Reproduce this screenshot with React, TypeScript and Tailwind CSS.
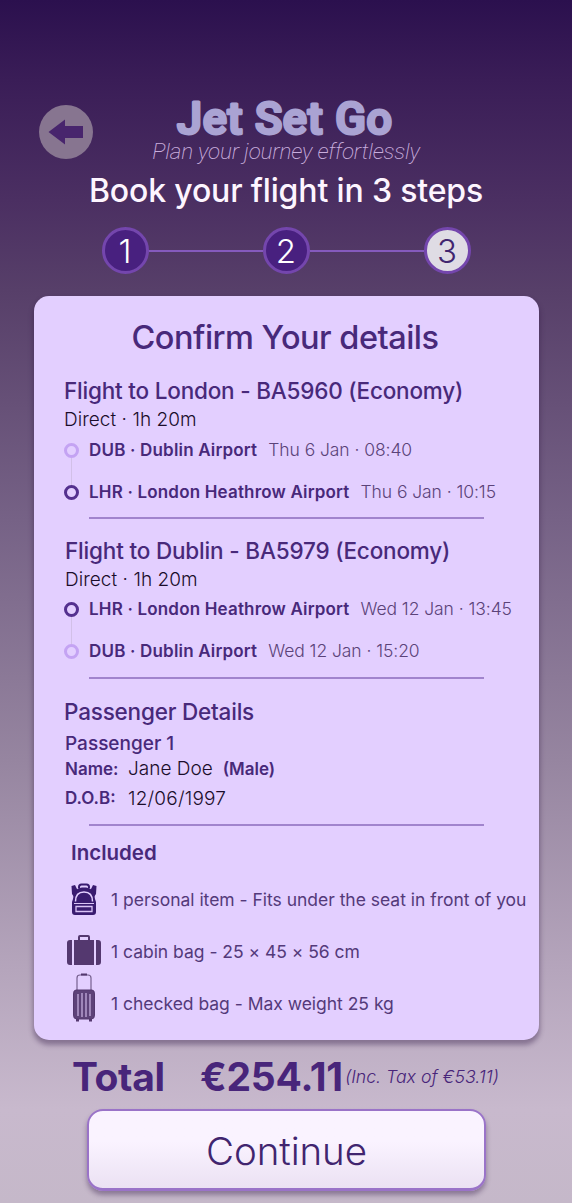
import type { ReactNode } from "react";

function Step({ n, active }: { n: number; active?: boolean }) {
  return (
    <div
      className={
        "flex size-[47px] shrink-0 items-center justify-center rounded-full border-[3px] border-[#7446ad] pt-[2px] text-[33px] font-[350] leading-none " +
        (active ? "bg-[#dfdce4] text-[#41256f]" : "bg-[#48207f] text-white")
      }
    >
      {n}
    </div>
  );
}

function Stop({ dark, place, time, line, gap }: { dark?: boolean; place: string; time: string; line?: boolean; gap: string }) {
  return (
    <div className={"flex h-5 items-center whitespace-nowrap pl-[30px] leading-5 " + gap}>
      <div className={"relative size-[15px] shrink-0 rounded-full border-[3px] " + (dark ? "border-[#54308f]" : "border-[#c4a3f3]")}>
        {line && <div className="absolute left-1 top-3 h-[27px] w-px bg-[#d2c0e8]" />}
      </div>
      <span className="ml-[10px] text-[17px] font-semibold tracking-[0.18px] text-[#48297a]">{place}</span>
      <span className="ml-[11px] text-[17.5px] font-light tracking-[-0.07px] text-[#5b4379]">{time}</span>
    </div>
  );
}

function Rule({ gap }: { gap: string }) {
  return <div className={"ml-[55px] h-[2px] w-[395px] shrink-0 bg-[#a184cd] " + gap} />;
}

function Backpack() {
  return (
    <svg width="28" height="34" viewBox="0 0 28 34">
      <path d="M9 5V4q0-2.500 2.500-2.500h5Q19 1.500 19 4v1" fill="none" stroke="#391b70" strokeWidth="2" />
      <path d="M1.500 3l3.500-1 3 6-4 6-2-3zM26.500 3 23 2l-3 6 4 6 2-3z" fill="#391b70" />
      <path d="M3 16Q4 4.500 12 4.500h4q8 0 9 11.500l1 3v10q0 3-3 3H5q-3 0-3-3V19z" fill="#391b70" />
      <path d="M5.500 18.500Q5.500 9 14 9t8.500 9.500" fill="none" stroke="#e3cfff" strokeWidth="1.500" />
      <path d="M4 20.500h20" stroke="#d9c3f6" strokeWidth="1" />
      <path d="M6 23.500h16v5H6z" fill="none" stroke="#d9c3f6" strokeWidth="1.300" />
    </svg>
  );
}

function Suitcase() {
  return (
    <svg width="36" height="31" viewBox="0 0 36 31" fill="#54386f">
      <path d="M13 6V2q0-1 1-1h8q1 0 1 1v4" fill="none" stroke="#54386f" strokeWidth="2" />
      <path d="M8 5h20v25H8zM6 5v25H4q-3 0-3-3V8q0-3 3-3zM30 5v25h2q3 0 3-3V8q0-3-3-3z" />
    </svg>
  );
}

function Trolley() {
  return (
    <svg width="24" height="50" viewBox="0 0 24 50">
      <path d="M5 18V5q0-3 3-3h8q3 0 3 3v13" fill="none" stroke="#76608f" strokeWidth="1.200" />
      <path d="M9 1.500h6" stroke="#54386f" strokeWidth="2" />
      <path d="M4 17h16q2.500 0 2.500 4v21q0 4-3 4h-15q-3 0-3-4V21q0-4 2.500-4z" fill="#5d4279" stroke="#54386f" />
      <path d="M6 21v22M10 20v24M14 20v24M18 21v22" stroke="#cbb5e4" strokeWidth="1.200" />
      <path d="M4 46h3v2.500H4zM17 46h3v2.500h-3z" fill="#54386f" />
    </svg>
  );
}

function Item({ icon, children }: { icon: ReactNode; children: ReactNode }) {
  return (
    <div className="flex h-11 items-center">
      <div className="flex w-[40px] shrink-0 justify-center">{icon}</div>
      <span className="ml-[7px] whitespace-nowrap text-[17.5px] tracking-[-0.02px] text-[#543a7a]">{children}</span>
    </div>
  );
}

export default function App() {
  return (
    <div className="flex h-[1203px] w-[572px] flex-col overflow-hidden bg-[linear-gradient(180deg,#2b104e_0px,#3a1d57_80px,#4b2f62_200px,#573f69_290px,#766286_520px,#9685a0_760px,#b5a5bc_970px,#c8b9cd_1110px,#c5b8c9_1203px)] font-['Inter',sans-serif]">
      <header className="relative h-[296px] shrink-0">
        <button aria-label="Back" className="absolute left-[39px] top-[105px] flex size-[54px] items-center justify-center rounded-full bg-[#877590]">
          <svg width="36" height="26" viewBox="0 0 36 26" fill="#48256d">
            <path d="M.5 13 17 .5V7h18v12H17v6.500z" />
          </svg>
        </button>
        <div className="flex flex-col items-center whitespace-nowrap pt-[90px]">
          <h1 className="h-[49px]">
            <svg width="224" height="49" viewBox="0 0 224 49" className="overflow-visible" fill="#aaa3d3" stroke="#aaa3d3">
              <text x="3" y="44" textLength="215" className="font-['Roboto',sans-serif] text-[45px] font-medium" strokeWidth="3" strokeLinejoin="round">Jet Set Go</text>
            </svg>
          </h1>
          <p className="h-6 font-['Roboto',sans-serif] text-[22.5px] font-extralight italic leading-[24px] tracking-[-0.2px] text-[#c9aedd]">Plan your journey effortlessly</p>
          <h2 className="mt-[10px] h-9 text-[32px] font-medium leading-9 tracking-[-0.15px] text-[#fdf5ff]">Book your flight in 3 steps</h2>
          <div className="mt-[18px] flex items-center">
            <Step n={1} />
            <div className="h-[2px] w-[114px] bg-[#855abd]" />
            <Step n={2} />
            <div className="h-[2px] w-[114px] bg-[#855abd]" />
            <Step n={3} active />
          </div>
        </div>
      </header>

      <main className="ml-[34px] flex h-[744px] w-[505px] shrink-0 flex-col rounded-[15px] bg-[#e3cfff] pt-4 text-[#48297a] shadow-[0_4px_5px_1px_rgba(50,25,70,0.4)]">
        <h2 className="h-[50px] whitespace-nowrap pr-[3px] pt-px text-center text-[32.5px] font-[450] leading-[50px] tracking-[-0.5px]">Confirm Your details</h2>

        <h3 className="ml-[30px] mt-[14px] h-[30px] whitespace-nowrap text-[22.5px] font-[450] leading-[30px] tracking-[-0.2px]">Flight to London - BA5960 (Economy)</h3>
        <p className="ml-[30px] h-[26px] pt-px text-[19px] font-light leading-[26px] tracking-[0.05px] text-[#1b0d2b]">Direct · 1h 20m</p>
        <Stop place="DUB · Dublin Airport" time="Thu 6 Jan · 08:40" line gap="mt-2" />
        <Stop dark place="LHR · London Heathrow Airport" time="Thu 6 Jan · 10:15" gap="mt-[22px]" />
        <Rule gap="mt-[15px]" />

        <h3 className="ml-[31px] mt-[17px] h-[30px] whitespace-nowrap text-[22.5px] font-[450] leading-[30px] tracking-[-0.18px]">Flight to Dublin - BA5979 (Economy)</h3>
        <p className="ml-[31px] h-[26px] pt-px text-[19px] font-light leading-[26px] tracking-[0.05px] text-[#1b0d2b]">Direct · 1h 20m</p>
        <Stop dark place="LHR · London Heathrow Airport" time="Wed 12 Jan · 13:45" line gap="mt-[7px]" />
        <Stop place="DUB · Dublin Airport" time="Wed 12 Jan · 15:20" gap="mt-[22px]" />
        <Rule gap="mt-4" />

        <h3 className="ml-[30px] mt-[18px] h-[30px] text-[22.5px] font-[450] leading-[30px] tracking-[-0.2px]">Passenger Details</h3>
        <p className="ml-[31px] mt-[3px] h-[26px] pt-px text-[19px] font-[450] leading-[26px]">Passenger 1</p>
        <div className="ml-[31px] flex h-[26px] items-center">
          <span className="w-[63px] pt-px text-[17px] font-semibold">Name:</span>
          <span className="text-[19px] font-light text-[#1b0d2b]">Jane Doe</span>
          <span className="ml-[10px] pt-px text-[17px] font-semibold">(Male)</span>
        </div>
        <div className="ml-[31px] mt-[3px] flex h-[26px] items-center pt-[2px]">
          <span className="w-[63px] text-[17px] font-semibold">D.O.B:</span>
          <span className="text-[19px] font-light tracking-[0.2px] text-[#1b0d2b]">12/06/1997</span>
        </div>
        <Rule gap="mt-[13px]" />

        <h3 className="ml-[37px] mt-[14px] h-[26px] text-[20.5px] font-semibold leading-[26px]">Included</h3>
        <div className="ml-[30px] mt-3 flex flex-col gap-2">
          <Item icon={<Backpack />}>1 personal item - Fits under the seat in front of you</Item>
          <Item icon={<div className="-mt-1"><Suitcase /></div>}>1 cabin bag - 25 × 45 × 56 cm</Item>
          <Item icon={<div className="-mt-3"><Trolley /></div>}>1 checked bag - Max weight 25 kg</Item>
        </div>
      </main>

      <div className="ml-[72px] mt-[13px] flex h-12 shrink-0 items-center whitespace-nowrap text-[#48257a]">
        <span className="w-[128px] text-[39px] font-bold tracking-[-0.4px]">Total</span>
        <span className="text-[39px] font-bold tracking-[-0.2px]">€254.11</span>
        <span className="ml-[2px] text-[17.7px] font-[350] italic">(Inc. Tax of €53.11)</span>
      </div>

      <button className="ml-[87px] mt-[8px] flex h-[82px] w-[399px] shrink-0 items-center justify-center rounded-[16px] border-2 border-b-[3px] border-[#9a73c8] bg-linear-to-b from-[#faf3ff] from-40% to-[#ebe1f3] pt-[4px] text-[38.5px] font-[350] tracking-[-0.1px] text-[#41256f] shadow-[0_4px_5px_rgba(50,25,70,0.4)]">
        Continue
      </button>
    </div>
  );
}
